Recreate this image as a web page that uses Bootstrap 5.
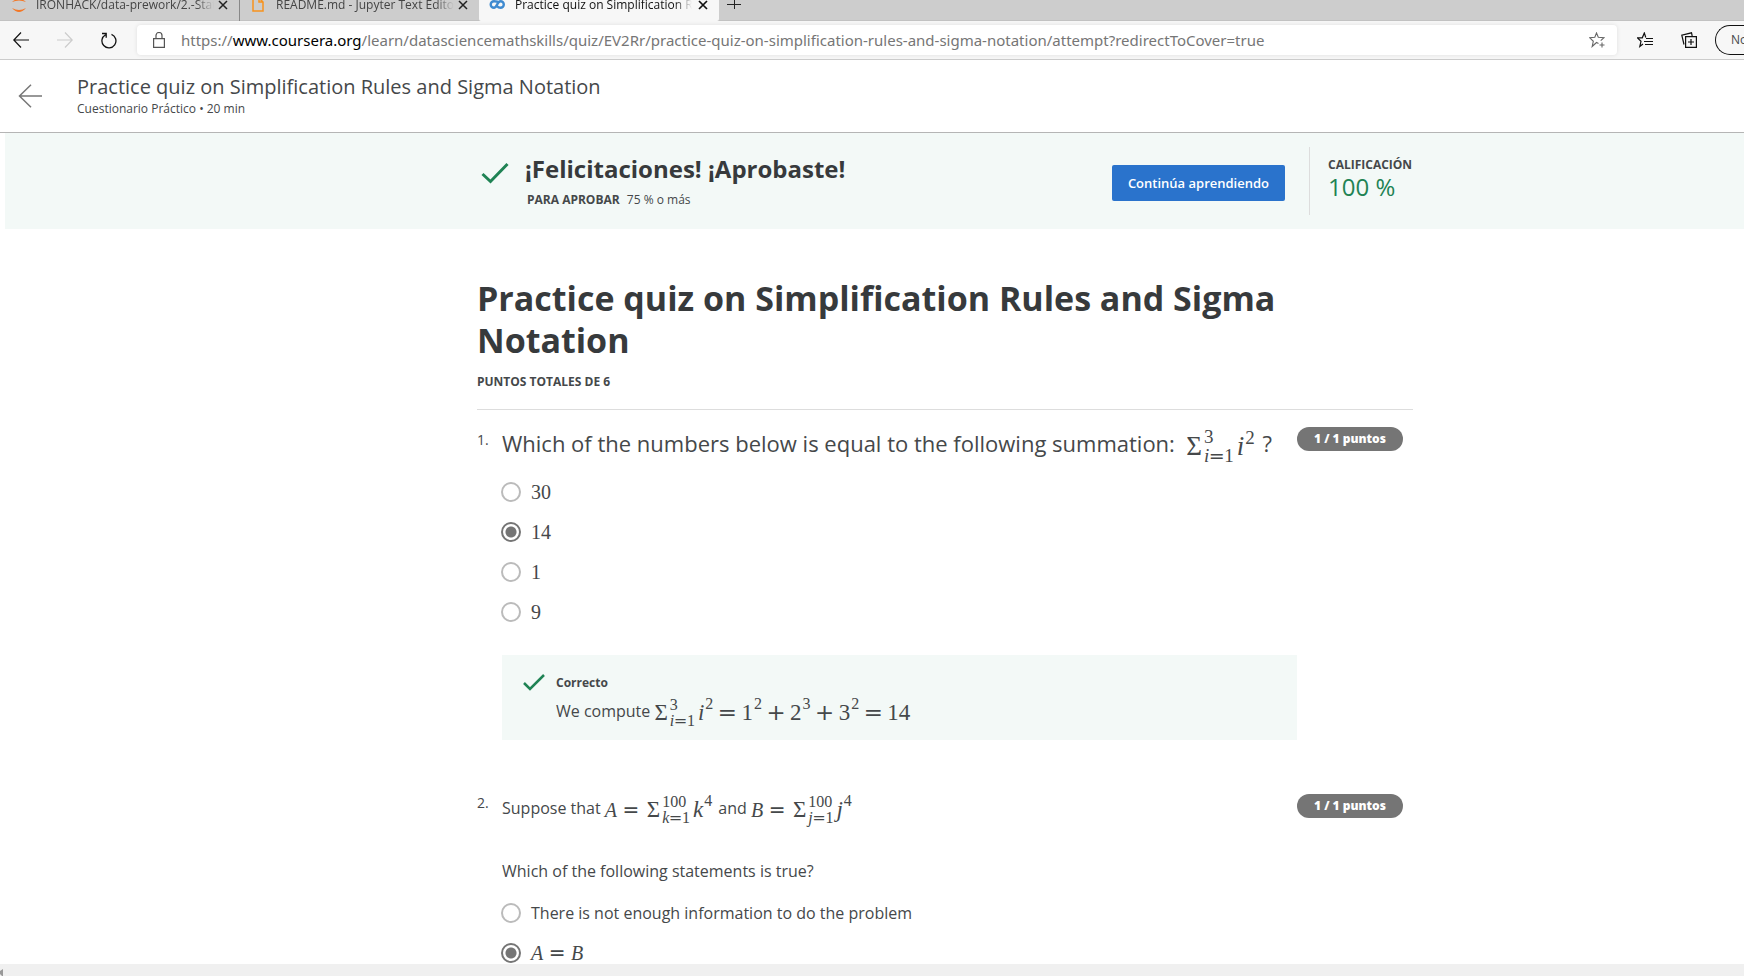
<!DOCTYPE html>
<html lang="es">
<head>
<meta charset="utf-8">
<meta name="viewport" content="width=device-width, initial-scale=1">
<title>Practice quiz on Simplification Rules and Sigma Notation</title>
<link href="https://cdn.jsdelivr.net/npm/bootstrap@5.3.0/dist/css/bootstrap.min.css" rel="stylesheet">
<style>
  body { font-family: "Open Sans", "Noto Sans", sans-serif; font-size: 16px; color: #45484a; background: #fff; }
  svg { display: block; flex: none; }

  /* browser chrome */
  .tabstrip { height: 21px; background: #cdcdcd; box-shadow: inset 0 -1px #c2c2c2; }
  .tab-item { height: 33px; width: 239px; flex: none; font-size: 12px; color: #444; padding: 0 11px 0 12px; }
  .tab-item.first { width: 240px; padding-left: 10px; border-right: 1px solid #888; }
  .tab-item.current { background: #f7f7f7; color: #111; border-radius: 0 0 2px 2px; width: 240px; padding-left: 10px; gap: 2px; }
  .tab-text { flex: 1; overflow: hidden; white-space: nowrap; line-height: 16px; -webkit-mask-image: linear-gradient(90deg, #000 90%, transparent); mask-image: linear-gradient(90deg, #000 90%, transparent); }
  .plain-btn { border: 0; background: none; padding: 0; color: inherit; flex: none; }
  .toolbar { height: 39px; background: #f7f7f7; border-bottom: 1px solid #ccc; padding-left: 13px; }
  .nav-tools { gap: 28px; }
  .address { height: 30px; margin-left: 20px; padding: 0 12px 0 16px; background: #fff; border-radius: 4px; box-shadow: 0 0 4px #0000001a; color: #767676; font-family: "Noto Sans", sans-serif; font-size: 15px; white-space: nowrap; }
  .address a { color: inherit; text-decoration: none; }
  .address b { color: #000; font-weight: 400; }
  .profile { width: 29px; height: 30px; margin-left: 18px; padding-left: 15px; border: 1px solid #111; border-right: 0; border-radius: 15px 0 0 15px; font-size: 12px; overflow: hidden; }
  .chrome-tools { gap: 28px; margin-left: 20px; }

  /* course header */
  .course-head { height: 73px; border-bottom: 1px solid #b5b5b5; padding-left: 18px; gap: 35px; }
  .course-head h1 { font-size: 20px; line-height: 26px; font-weight: 400; }
  .text-12 { font-size: 12px; line-height: 18px; }

  /* the page is scrolled sideways, so its column sits right of the middle */
  .quiz-col { max-width: 936px; margin: 0 auto; }
  .shifted { padding-left: 141px; }
  .page-area { padding-left: 5px; }
  .mint { background: #f3f9f7; }
  .banner { height: 96px; }
  .banner h2 { font-size: 24px; line-height: 32px; font-weight: 700; color: #373a3c; }
  .pass-line { margin-top: 6px; padding-left: 2px; }
  .btn-learn { background: #2a73cc; color: #fff; font-size: 13px; font-weight: 600; line-height: 20px; padding: 8px 16px; border-radius: 2px; margin-top: 4px; }
  .btn-learn:hover { background: #1f60b0; color: #fff; }
  .grade { border-left: 1px solid #ddd; height: 68px; width: 104px; padding: 9px 0 0 18px; margin-left: 24px; white-space: nowrap; }
  .grade-num { font-size: 24px; line-height: 26px; color: #1f8354; }

  .quiz-title { font-size: 34px; line-height: 42px; font-weight: 700; padding-top: 48px; color: #373a3c; }
  .rule-line { border-top: 1px solid #ddd; margin-top: 18px; }
  .q-num { width: 25px; flex: none; font-size: 14px; line-height: 20px; }
  .q-big { font-size: 22px; line-height: 34px; }
  .pts { background: #757575; color: #fff; font-size: 12px; font-weight: 800; line-height: 24px; width: 106px; height: 24px; border-radius: 12px; margin: 1px 10px 0 0; }
  .opt { height: 40px; gap: 10px; }
  .opts { margin-top: 6px; }
  .opt input { appearance: none; width: 20px; height: 20px; margin: 0 0 0 -1px; border: 2px solid #bbb; border-radius: 50%; flex: none; }
  .opt input:checked { border-color: #757575; background: radial-gradient(circle, #757575 0 5px, #fff 6px); }
  .feedback { margin-top: 23px; height: 85px; padding: 19px 21px; gap: 11px; }
  .q-gap { margin-top: 32px; }
  .q-next { margin-top: 53px; }
  .q-opts { margin-top: 10px; }

  /* formulas */
  .tex { font-family: "Liberation Serif", serif; white-space: nowrap; display: inline-flex; align-items: center; line-height: 24px; vertical-align: middle; margin-right: 2px; }
  .tex-20 { font-size: 20px; }
  .tex-23 { font-size: 23px; }
  .tex-27 { font-size: 27px; }
  .tex .op { font-family: "DejaVu Math TeX Gyre", "Liberation Serif", serif; margin: 0 5px; }
  .tex-20 .op { margin: 0 6px; }
  .tex .op-s { font-family: "DejaVu Math TeX Gyre", "Liberation Serif", serif; }
  .tex .scripts { display: inline-flex; flex-direction: column; font-size: 16px; line-height: 16px; margin: 0 3px 0 2px; }
  .tex .pow { font-size: 16px; line-height: 16px; padding: 0 0 18px 1px; }
  .tex-27 .scripts, .tex-27 .pow { font-size: 19px; line-height: 19px; }

  .hscroll { height: 12px; background: #f0f0f0; flex: none; }
</style>
</head>
<body class="vh-100 d-flex flex-column overflow-hidden">

<div class="tabstrip d-flex align-items-end overflow-hidden flex-shrink-0">
  <div class="tab-item first d-flex align-items-center">
    <svg width="18" height="18" viewBox="0 0 18 18" fill="#f37726"><path d="M2 6Q9 0 16 6Q9 3 2 6ZM2 12Q9 16 16 12Q9 20 2 12Z"/></svg>
    <span class="tab-text ms-2">IRONHACK/data-prework/2.-Statistics</span>
    <button class="plain-btn ms-1" aria-label="Cerrar"><svg width="10" height="10" viewBox="0 0 10 10" stroke="#222" stroke-width="1.5"><path d="M1 1L9 9M9 1L1 9"/></svg></button>
  </div>
  <div class="tab-item d-flex align-items-center">
    <svg width="12" height="15" viewBox="0 0 12 15" fill="none" stroke="#f7931e" stroke-width="1.5"><path d="M1 1H7L11 5V14H1ZM7 1V5H11"/></svg>
    <span class="tab-text ms-2 ps-1">README.md - Jupyter Text Editor</span>
    <button class="plain-btn ms-1" aria-label="Cerrar"><svg width="10" height="10" viewBox="0 0 10 10" stroke="#222" stroke-width="1.5"><path d="M1 1L9 9M9 1L1 9"/></svg></button>
  </div>
  <div class="tab-item current d-flex align-items-center">
    <svg width="16" height="9" viewBox="0 0 16 9" fill="none" stroke="#3f8ad0" stroke-width="2.4"><path d="M10.500 3C9 1.500 8 1.200 5 1.200A3.300 3.300 0 0 0 5 7.800C8 7.800 8 1.200 11.500 1.200A3.300 3.300 0 0 1 11.500 7.800C9.500 7.800 8.700 7 7.800 6"/></svg>
    <span class="tab-text ms-2">Practice quiz on Simplification Rules</span>
    <button class="plain-btn ms-1" aria-label="Cerrar"><svg width="10" height="10" viewBox="0 0 10 10" stroke="#111" stroke-width="1.700"><path d="M1 1L9 9M9 1L1 9"/></svg></button>
  </div>
  <button class="plain-btn ms-2 mb-2 pb-1" aria-label="Nueva pestaña"><svg width="14" height="14" viewBox="0 0 14 14" stroke="#222"><path d="M0 9.500H14M7.500 3V14"/></svg></button>
</div>

<div class="toolbar d-flex align-items-center flex-shrink-0 overflow-hidden">
  <div class="nav-tools d-flex align-items-center">
    <button class="plain-btn" aria-label="Atrás"><svg width="16" height="16" viewBox="0 0 16 16" fill="none" stroke="#111" stroke-width="1.200"><path d="M16 8H1M8 0.500L0.800 8L8 15.500"/></svg></button>
    <button class="plain-btn" aria-label="Adelante"><svg width="16" height="16" viewBox="0 0 16 16" fill="none" stroke="#ccc" stroke-width="1.200"><path d="M0 8H15M8 0.500L15.200 8L8 15.500"/></svg></button>
    <button class="plain-btn" aria-label="Actualizar"><svg width="16" height="17" viewBox="0 0 16 17" fill="none" stroke="#111" stroke-width="1.300"><path d="M10.500 2.300A7 7 0 1 1 4.500 2.700M1 1.500H5.200V5.700"/></svg></button>
  </div>
  <div class="address d-flex align-items-center flex-grow-1">
    <svg width="12" height="16" viewBox="0 0 12 16" fill="none" stroke="#555" stroke-width="1.200"><path d="M0.600 6.600H11.400V15.400H0.600ZM3 6.500V3.500A3 3 0 0 1 9 3.500V6.500"/></svg>
    <a class="ms-3" href="#">https://<b>www.coursera.org</b>/learn/datasciencemathskills/quiz/EV2Rr/practice-quiz-on-simplification-rules-and-sigma-notation/attempt?redirectToCover=true</a>
    <button class="plain-btn ms-auto" aria-label="Favorito"><svg width="16" height="16" viewBox="0 0 16 16" fill="none" stroke="#666" stroke-width="1.100"><path d="M9.500 11.500L7.500 10.500L3.200 14.500L4.300 9.300L0.800 5.800L5.800 5.300L7.500 1L9.300 5.300L14.800 5.800L11.700 8.700M13 10.500V15.500M10.500 13H15.500"/></svg></button>
  </div>
  <div class="chrome-tools d-flex align-items-center">
    <button class="plain-btn" aria-label="Favoritos"><svg width="16" height="16" viewBox="0 0 16 16" fill="none" stroke="#111" stroke-width="1.200"><path d="M6 12L2.800 14.500L4 9.300L0.500 5.800H5.300L7.300 1L8.800 5.500M9 6.500H16M7 9.500H16M8 12.500H16"/></svg></button>
    <button class="plain-btn" aria-label="Colecciones"><svg width="16" height="16" viewBox="0 0 16 16" fill="none" stroke="#111" stroke-width="1.200"><path d="M4.600 4.600H15.400V15.400H4.600ZM10 7V13M7 10H13M3 12.500L0.800 3.200L10.500 0.800L11.200 4"/></svg></button>
  </div>
  <button class="plain-btn profile text-start" aria-label="Perfil">No</button>
</div>

<header class="course-head d-flex align-items-center flex-shrink-0">
  <a href="#" aria-label="Volver"><svg width="24" height="24" viewBox="0 0 24 24" fill="none" stroke="#777" stroke-width="1.500"><path d="M24 12H1.500M13 0.800L1.500 12L13 23.200"/></svg></a>
  <div>
    <h1 class="m-0">Practice quiz on Simplification Rules and Sigma Notation</h1>
    <div class="text-12">Cuestionario Práctico • 20 min</div>
  </div>
</header>

<main class="page-area flex-grow-1 overflow-hidden">
  <section class="mint shifted">
    <div class="quiz-col banner d-flex align-items-center">
      <svg class="ms-1 mb-3" width="28" height="22" viewBox="0 0 28 22" fill="none" stroke="#1f8354" stroke-width="3"><path d="M1.500 12L9.500 19.500L26.500 2"/></svg>
      <div class="ms-3">
        <h2 class="m-0">¡Felicitaciones! ¡Aprobaste!</h2>
        <div class="text-12 pass-line"><b class="me-1">PARA APROBAR</b> 75 % o más</div>
      </div>
      <button class="btn btn-learn border-0 ms-auto">Continúa aprendiendo</button>
      <div class="grade">
        <div class="text-12 fw-bold">CALIFICACIÓN</div>
        <div class="grade-num">100 %</div>
      </div>
    </div>
  </section>

  <section class="shifted">
    <div class="quiz-col">
      <h2 class="quiz-title m-0">Practice quiz on Simplification Rules and Sigma Notation</h2>
      <div class="text-12 fw-bold mt-2 pt-1">PUNTOS TOTALES DE 6</div>
      <div class="rule-line"></div>

      <article class="d-flex pt-3">
        <div class="q-num pt-1">1.</div>
        <div class="flex-grow-1">
          <div class="q-big">Which of the numbers below is equal to the following summation: &nbsp;<span class="tex tex-27">Σ<span class="scripts"><span>3</span><span><i>i</i><span class="op-s">=</span>1</span></span><i>i</i><span class="pow">2</span></span> ?</div>
          <div class="opts">
            <label class="opt d-flex align-items-center"><input type="radio" name="q1"><span class="tex tex-20">30</span></label>
            <label class="opt d-flex align-items-center"><input type="radio" name="q1" checked><span class="tex tex-20">14</span></label>
            <label class="opt d-flex align-items-center"><input type="radio" name="q1"><span class="tex tex-20">1</span></label>
            <label class="opt d-flex align-items-center"><input type="radio" name="q1"><span class="tex tex-20">9</span></label>
          </div>
          <div class="feedback mint d-flex">
            <svg width="22" height="17" viewBox="0 0 22 17" fill="none" stroke="#1f8354" stroke-width="2.500"><path d="M1 9L7 15L21 1"/></svg>
            <div>
              <div class="text-12 fw-bold mb-1">Correcto</div>
              <div>We compute <span class="tex tex-23">Σ<span class="scripts"><span>3</span><span><i>i</i><span class="op-s">=</span>1</span></span><i>i</i><span class="pow">2</span><span class="op">=</span>1<span class="pow">2</span><span class="op">+</span>2<span class="pow">3</span><span class="op">+</span>3<span class="pow">2</span><span class="op">=</span>14</span></div>
            </div>
          </div>
        </div>
        <div class="pts text-center flex-shrink-0">1 / 1 puntos</div>
      </article>

      <article class="d-flex q-next">
        <div class="q-num">2.</div>
        <div class="flex-grow-1">
          <div>Suppose that <span class="tex tex-20"><i>A</i><span class="op">=</span></span><span class="tex tex-23">Σ<span class="scripts"><span>100</span><span><i>k</i><span class="op-s">=</span>1</span></span><i>k</i><span class="pow">4</span></span> and <span class="tex tex-20"><i>B</i><span class="op">=</span></span><span class="tex tex-23">Σ<span class="scripts"><span>100</span><span><i>j</i><span class="op-s">=</span>1</span></span><i>j</i><span class="pow">4</span></span></div>
          <div class="q-gap">Which of the following statements is true?</div>
          <div class="q-opts">
            <label class="opt d-flex align-items-center"><input type="radio" name="q2"><span>There is not enough information to do the problem</span></label>
            <label class="opt d-flex align-items-center"><input type="radio" name="q2" checked><span class="tex tex-20"><i>A</i><span class="op">=</span><i>B</i></span></label>
          </div>
        </div>
        <div class="pts text-center flex-shrink-0">1 / 1 puntos</div>
      </article>
    </div>
  </section>
</main>

<div class="hscroll d-flex align-items-end"><svg width="3" height="7" viewBox="0 0 3 7" fill="#999"><path d="M0 2L3 0V7H2L0 5Z"/></svg></div>

<script src="https://cdn.jsdelivr.net/npm/bootstrap@5.3.0/dist/js/bootstrap.bundle.min.js"></script>
</body>
</html>
